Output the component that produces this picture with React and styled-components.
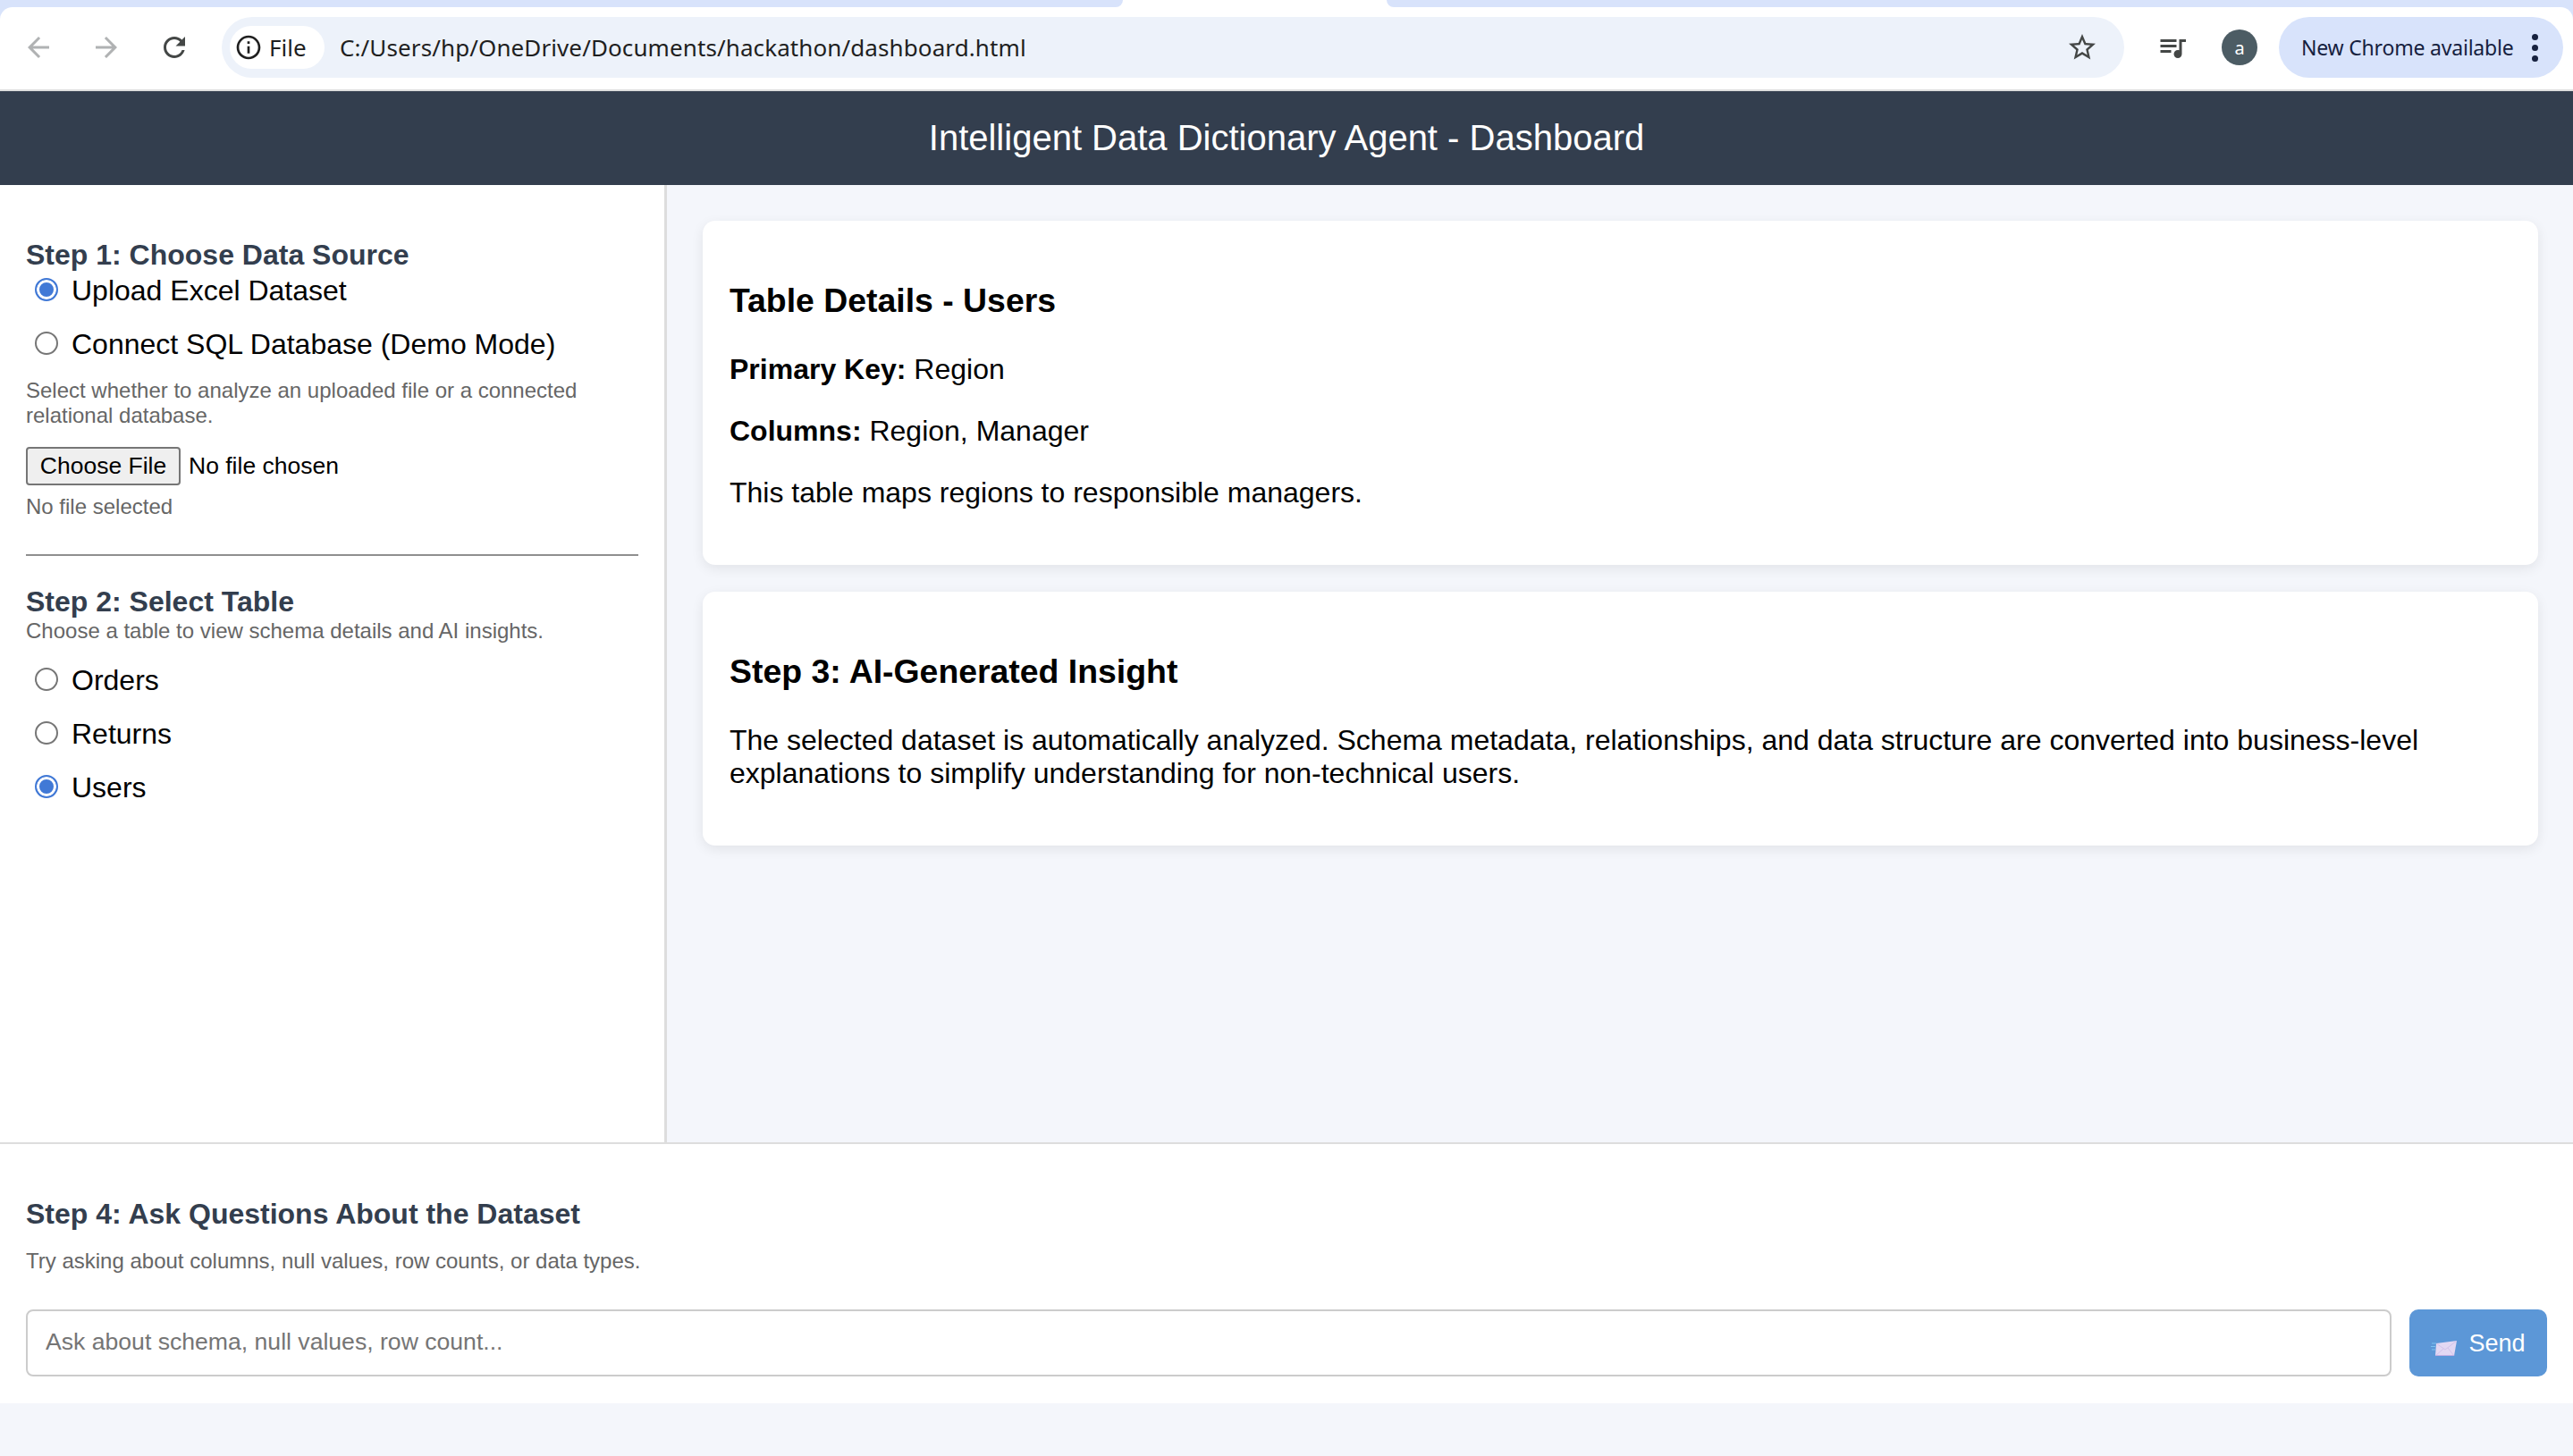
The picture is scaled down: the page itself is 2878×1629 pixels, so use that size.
import React from "react";
import styled, { createGlobalStyle } from "styled-components";

const GlobalStyle = createGlobalStyle`
  html, body {
    margin: 0;
    padding: 0;
  }
  body {
    background: #f4f6fb;
    font-family: "Liberation Sans", Arial, sans-serif;
    color: #000;
    min-height: 1629px;
  }
  * {
    box-sizing: border-box;
  }
`;

const BrowserFrame = styled.div`
  background: #d8e3fb;
`;

const TabStrip = styled.div`
  height: 8px;
  background: #fff;
  display: flex;
  justify-content: space-between;
`;

const TabEdge = styled.div`
  height: 8px;
  width: ${(props) => props.$width}px;
  background: #d8e3fb;
  border-bottom-left-radius: ${(props) => (props.$side === "right" ? 10 : 0)}px;
  border-bottom-right-radius: ${(props) => (props.$side === "left" ? 10 : 0)}px;
`;

const Toolbar = styled.div`
  height: 94px;
  padding: 0 11px 2px 5px;
  background: #fff;
  border-bottom: 2px solid #dddddd;
  border-radius: 14px 14px 0 0;
  display: flex;
  align-items: center;
  font-family: "Noto Sans", "Open Sans", sans-serif;
`;

const IconSlot = styled.div`
  width: ${(props) => props.$width || 76}px;
  display: flex;
  justify-content: center;
  align-items: center;
  flex-shrink: 0;
  color: ${(props) => props.$color || "#444746"};
`;

const Omnibox = styled.div`
  margin-left: 15px;
  width: 2128px;
  height: 68px;
  border-radius: 34px;
  background: #edf2fa;
  display: flex;
  align-items: center;
  padding: 0 29px 0 9px;
  flex-shrink: 0;
`;

const SiteChip = styled.div`
  width: 106px;
  height: 48px;
  border-radius: 24px;
  background: #fff;
  display: flex;
  align-items: center;
  gap: 7px;
  padding-left: 5px;
  font-size: 26px;
  color: #1f1f1f;
`;

const UrlText = styled.span`
  margin-left: 17px;
  font-size: 26px;
  color: #1f1f1f;
  letter-spacing: 0.1px;
`;

const StarSlot = styled.div`
  margin-left: auto;
  display: flex;
  color: #444746;
`;

const Avatar = styled.div`
  width: 40px;
  height: 40px;
  border-radius: 50%;
  margin-left: 1px;
  background: #4c5c64;
  color: #fff;
  font-size: 20px;
  display: flex;
  align-items: center;
  justify-content: center;
  flex-shrink: 0;
`;

const UpdatePill = styled.div`
  margin-left: 24px;
  width: 318px;
  height: 68px;
  border-radius: 34px;
  background: #d8e3fb;
  color: #16213f;
  display: flex;
  align-items: center;
  padding-left: 25px;
  font-size: 23px;
  flex-shrink: 0;
  letter-spacing: -0.2px;
`;

const PillDots = styled.div`
  margin-left: 20px;
  display: flex;
  flex-direction: column;
  gap: 5px;
  span {
    width: 7px;
    height: 7px;
    border-radius: 50%;
    background: #16213f;
  }
`;

const PageHeader = styled.header`
  height: 105px;
  background: #333e4e;
  color: #fff;
  font-size: 40px;
  display: flex;
  align-items: center;
  justify-content: center;
`;

const Main = styled.main`
  display: flex;
  height: 1071px;
`;

const Sidebar = styled.aside`
  width: 746px;
  flex-shrink: 0;
  background: #fff;
  border-right: 3px solid #dddddd;
  padding: 60px 29px 0 29px;
`;

const StepTitle = styled.h3`
  margin: 0;
  font-size: 32px;
  font-weight: 700;
  color: #333e4e;
`;

const RadioList = styled.div`
  display: flex;
  flex-direction: column;
  gap: 23px;
  margin-top: ${(props) => props.$top || 0}px;
`;

const RadioRow = styled.label`
  display: flex;
  align-items: center;
  font-size: 32px;
  line-height: 37px;
  padding-left: 10px;
`;

const RadioInput = styled.input.attrs({ type: "radio" })`
  appearance: none;
  width: 26px;
  height: 26px;
  margin: 0 15px 0 0;
  position: relative;
  top: -2px;
  border: 2px solid #767676;
  border-radius: 50%;
  background: #fff;
  &:checked {
    border-color: #4179d6;
    background: #4179d6;
    box-shadow: inset 0 0 0 3px #fff;
  }
`;

const Hint = styled.p`
  margin: ${(props) => props.$top || 0}px 0 0;
  font-size: 24px;
  line-height: 28px;
  color: #666666;
`;

const FileRow = styled.div`
  display: flex;
  align-items: center;
  margin-top: 21px;
  font-size: 26.5px;
`;

const FileButton = styled.button`
  width: 173px;
  height: 43px;
  padding: 0;
  font: inherit;
  color: #000;
  background: #efefef;
  border: 2px solid #767676;
  border-radius: 4px;
  margin-right: 9px;
`;

const Divider = styled.hr`
  margin: 39px 0 33px;
  border: 0;
  border-top: 2px solid #8f8f8f;
`;

const Content = styled.section`
  flex: 1;
  padding: 40px 39px 0 40px;
  display: flex;
  flex-direction: column;
  gap: 30px;
`;

const Card = styled.article`
  background: #fff;
  border-radius: 14px;
  padding: 68px 30px 62px;
  box-shadow: 0 4px 14px rgba(0, 0, 0, 0.08);
`;

const CardTitle = styled.h2`
  margin: 0;
  font-size: 37.4px;
  font-weight: 700;
  line-height: 42px;
`;

const CardText = styled.p`
  margin: ${(props) => props.$top || 32}px 0 0;
  font-size: 32px;
  line-height: 37px;
`;

const AskPanel = styled.footer`
  background: #fff;
  border-top: 2px solid #dddddd;
  padding: 60px 29px 30px;
`;

const AskRow = styled.form`
  display: flex;
  gap: 20px;
  margin-top: 40px;
`;

const AskInput = styled.input`
  flex: 1;
  height: 75px;
  padding: 0 20px 2px;
  font: 26.6px "Liberation Sans", Arial, sans-serif;
  border: 2px solid #cccccc;
  border-radius: 8px;
  outline: none;
  &::placeholder {
    color: #757575;
    opacity: 1;
  }
`;

const SendButton = styled.button`
  width: 154px;
  height: 75px;
  border: 0;
  border-radius: 10px;
  background: #5c97d7;
  color: #fff;
  font: 27px "Liberation Sans", Arial, sans-serif;
  display: flex;
  align-items: center;
  justify-content: center;
  gap: 12px;
  padding: 2px 0 0;
`;

const Icon = ({ d, size = 36 }) => (
  <svg width={size} height={size} viewBox="0 0 24 24" fill="currentColor">
    <path d={d} />
  </svg>
);

const icons = {
  back: "M20 11H7.83l5.59-5.59L12 4l-8 8 8 8 1.41-1.41L7.83 13H20v-2z",
  forward: "M12 4l-1.41 1.41L16.17 11H4v2h12.17l-5.58 5.59L12 20l8-8z",
  reload:
    "M17.65 6.35C16.2 4.9 14.21 4 12 4c-4.42 0-7.99 3.58-7.99 8s3.57 8 7.99 8c3.73 0 6.84-2.55 7.73-6h-2.08c-.82 2.33-3.04 4-5.65 4-3.31 0-6-2.69-6-6s2.69-6 6-6c1.66 0 3.14.69 4.22 1.78L13 11h7V4l-2.35 2.35z",
  info: "M11 7h2v2h-2zm0 4h2v6h-2zm1-9C6.48 2 2 6.48 2 12s4.48 10 10 10 10-4.48 10-10S17.52 2 12 2zm0 18c-4.41 0-8-3.59-8-8s3.59-8 8-8 8 3.59 8 8-3.59 8-8 8z",
  star: "M22 9.24l-7.19-.62L12 2 9.19 8.63 2 9.24l5.46 4.73L5.82 21 12 17.27 18.18 21l-1.63-7.03L22 9.24zM12 15.4l-3.76 2.27 1-4.28-3.32-2.88 4.38-.38L12 6.1l1.71 4.04 4.38.38-3.32 2.88 1 4.28L12 15.4z",
  queue:
    "M15 6H3v2h12V6zm0 4H3v2h12v-2zM3 16h8v-2H3v2zM17 6v8.18c-.31-.11-.65-.18-1-.18-1.66 0-3 1.34-3 3s1.34 3 3 3 3-1.34 3-3V8h3V6h-5z",
};

const EnvelopeIcon = () => (
  <svg width="30" height="18" viewBox="0 0 30 18" style={{ marginTop: 10 }}>
    <path d="M1 3h5M0 6.5h5M1 10h4" stroke="#7cc4f2" strokeWidth="1.2" />
    <path d="M6 3 L29 0 L26 17 L5 17 Z" fill="#e3d8f3" />
    <path d="M6 3 L16 10 L29 0 M5 17 L14 9 M26 17 L19 8" stroke="#cdbce8" strokeWidth="0.8" fill="none" />
    <path d="M5 16 H26 L26 17 L5 17 Z" fill="#c3aee3" />
  </svg>
);

const sources = [
  { label: "Upload Excel Dataset", checked: true },
  { label: "Connect SQL Database (Demo Mode)" },
];

const tables = [
  { label: "Orders" },
  { label: "Returns" },
  { label: "Users", checked: true },
];

export default function App() {
  return (
    <>
      <GlobalStyle />
      <BrowserFrame>
        <TabStrip>
          <TabEdge $width={1256} $side="left" />
          <TabEdge $width={1327} $side="right" />
        </TabStrip>
        <Toolbar>
          <IconSlot $color="#b0b2b3">
            <Icon d={icons.back} />
          </IconSlot>
          <IconSlot $color="#b0b2b3">
            <Icon d={icons.forward} />
          </IconSlot>
          <IconSlot>
            <Icon d={icons.reload} />
          </IconSlot>
          <Omnibox>
            <SiteChip>
              <Icon d={icons.info} size={32} />
              File
            </SiteChip>
            <UrlText>C:/Users/hp/OneDrive/Documents/hackathon/dashboard.html</UrlText>
            <StarSlot>
              <Icon d={icons.star} />
            </StarSlot>
          </Omnibox>
          <IconSlot $width={108}>
            <Icon d={icons.queue} />
          </IconSlot>
          <Avatar>a</Avatar>
          <UpdatePill>
            New Chrome available
            <PillDots>
              <span />
              <span />
              <span />
            </PillDots>
          </UpdatePill>
        </Toolbar>
      </BrowserFrame>

      <PageHeader>Intelligent Data Dictionary Agent - Dashboard</PageHeader>

      <Main>
        <Sidebar>
          <StepTitle>Step 1: Choose Data Source</StepTitle>
          <RadioList $top={3}>
            {sources.map((item) => (
              <RadioRow key={item.label}>
                <RadioInput name="source" defaultChecked={item.checked} />
                {item.label}
              </RadioRow>
            ))}
          </RadioList>
          <Hint $top={19}>
            Select whether to analyze an uploaded file or a connected relational database.
          </Hint>
          <FileRow>
            <FileButton type="button">Choose File</FileButton>
            No file chosen
          </FileRow>
          <Hint $top={10}>No file selected</Hint>
          <Divider />
          <StepTitle>Step 2: Select Table</StepTitle>
          <Hint>Choose a table to view schema details and AI insights.</Hint>
          <RadioList $top={23}>
            {tables.map((item) => (
              <RadioRow key={item.label}>
                <RadioInput name="table" defaultChecked={item.checked} />
                {item.label}
              </RadioRow>
            ))}
          </RadioList>
        </Sidebar>
        <Content>
          <Card>
            <CardTitle>Table Details - Users</CardTitle>
            <CardText $top={38}>
              <b>Primary Key:</b> Region
            </CardText>
            <CardText>
              <b>Columns:</b> Region, Manager
            </CardText>
            <CardText>This table maps regions to responsible managers.</CardText>
          </Card>
          <Card>
            <CardTitle>Step 3: AI-Generated Insight</CardTitle>
            <CardText $top={38}>
              The selected dataset is automatically analyzed. Schema metadata, relationships, and data
              structure are converted into business-level explanations to simplify understanding for
              non-technical users.
            </CardText>
          </Card>
        </Content>
      </Main>

      <AskPanel>
        <StepTitle>Step 4: Ask Questions About the Dataset</StepTitle>
        <Hint $top={20}>Try asking about columns, null values, row counts, or data types.</Hint>
        <AskRow onSubmit={(event) => event.preventDefault()}>
          <AskInput placeholder="Ask about schema, null values, row count..." />
          <SendButton type="submit">
            <EnvelopeIcon />
            Send
          </SendButton>
        </AskRow>
      </AskPanel>
    </>
  );
}
